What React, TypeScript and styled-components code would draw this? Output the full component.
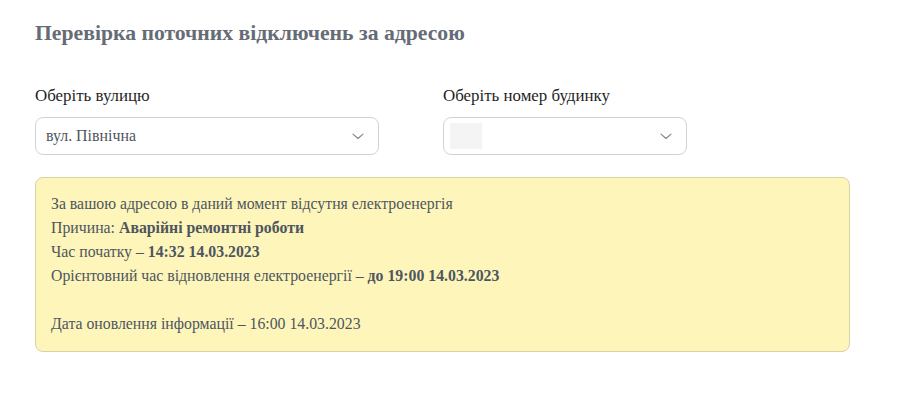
import * as React from 'react';
import styled, { createGlobalStyle } from 'styled-components';

const GlobalStyle = createGlobalStyle`
  body {
    margin: 0;
    background: #ffffff;
    font-family: "Liberation Serif", "Times New Roman", serif;
  }
`;

const Page = styled.div`
  padding: 18px 35px 40px;
  width: 815px;
`;

const Title = styled.h2`
  margin: 0 0 38px;
  font-size: 21.7px;
  line-height: 30px;
  font-weight: 700;
  color: #666c76;
`;

const Filters = styled.div`
  display: flex;
  gap: 64px;
  margin-bottom: 22px;
`;

const Field = styled.div<{ $w: number }>`
  display: flex;
  flex-direction: column;
  width: ${p => p.$w}px;
`;

const Label = styled.label`
  font-size: 16.9px;
  line-height: 20px;
  color: #1f1f1f;
  margin-bottom: 11px;
`;

const Select = styled.div`
  height: 38px;
  box-sizing: border-box;
  border: 1px solid #cfd2d6;
  border-radius: 8px;
  display: flex;
  align-items: center;
  justify-content: space-between;
  padding: 0 14px 0 10px;
  font-size: 15.9px;
  color: #505660;
  background: #fff;
`;

const Placeholder = styled.span`
  display: block;
  width: 32px;
  height: 26px;
  margin-left: -4px;
  background: #f4f4f4;
`;

const Chevron = () => (
  <svg width="12" height="7" viewBox="0 0 12 7" fill="none">
    <path d="M1 1.2l5 4.3 5-4.3" stroke="#7d8188" strokeWidth="1.1" strokeLinecap="round" strokeLinejoin="round" />
  </svg>
);

const Notice = styled.div`
  background: #fdf5b9;
  border: 1px solid #d9d2a4;
  border-radius: 8px;
  padding: 14px 15px 15px;
  font-size: 15.8px;
  line-height: 24px;
  color: #4e5560;
`;

const Line = styled.div<{ $gap?: boolean }>`
  margin-top: ${p => (p.$gap ? '24px' : '0')};
`;

export default function App() {
  return (
    <>
      <GlobalStyle />
      <Page>
        <Title>Перевірка поточних відключень за адресою</Title>
        <Filters>
          <Field $w={344}>
            <Label>Оберіть вулицю</Label>
            <Select>
              <span>вул. Північна</span>
              <Chevron />
            </Select>
          </Field>
          <Field $w={244}>
            <Label>Оберіть номер будинку</Label>
            <Select>
              <Placeholder />
              <Chevron />
            </Select>
          </Field>
        </Filters>
        <Notice>
          <Line>За вашою адресою в даний момент відсутня електроенергія</Line>
          <Line>Причина: <b>Аварійні ремонтні роботи</b></Line>
          <Line>Час початку – <b>14:32 14.03.2023</b></Line>
          <Line>Орієнтовний час відновлення електроенергії – <b>до 19:00 14.03.2023</b></Line>
          <Line $gap>Дата оновлення інформації – 16:00 14.03.2023</Line>
        </Notice>
      </Page>
    </>
  );
}
